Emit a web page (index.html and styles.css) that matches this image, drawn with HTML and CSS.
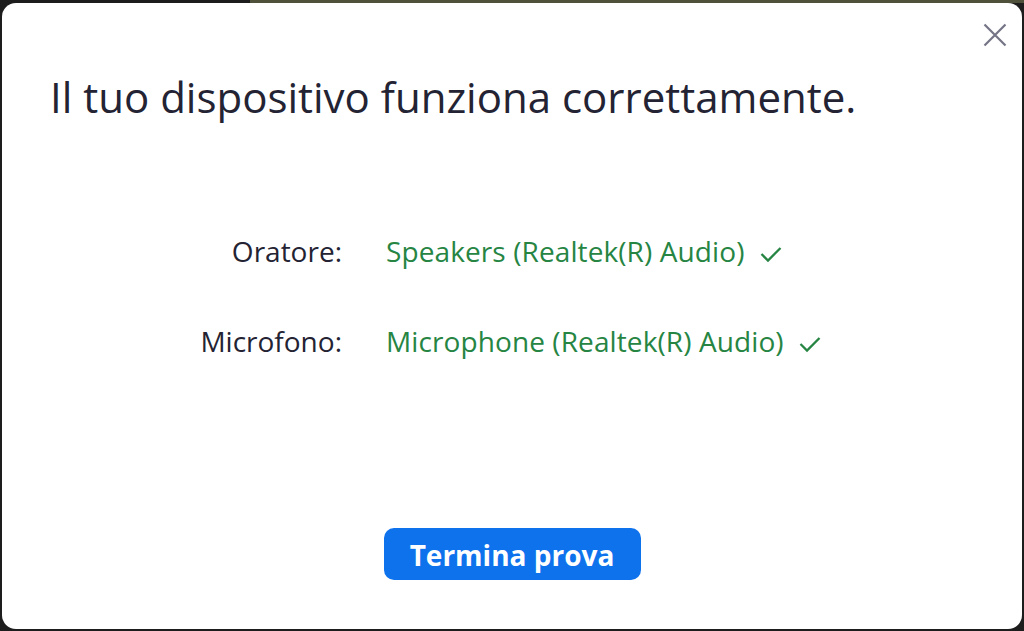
FILE: index.html
```html
<!DOCTYPE html>
<html>
<head>
    <meta charset="utf-8">
    <link rel="stylesheet" href="styles.css">
</head>
<body>
    <div class="backdrop">
        <div class="dialog">
            <button class="close" aria-label="Chiudi">
                <svg width="24" height="24" viewBox="0 0 24 24">
                    <path d="M1.5 1.5 L22.5 22.5 M22.5 1.5 L1.5 22.5" stroke="#747487" stroke-width="2.2" fill="none"/>
                </svg>
            </button>

            <h1 class="title">Il tuo dispositivo funziona correttamente.</h1>

            <div class="devices">
                <div class="label">Oratore:</div>
                <div class="value">
                    Speakers (Realtek(R) Audio)
                    <svg class="check" width="22" height="18" viewBox="0 0 22 18">
                        <path d="M1.5 9 L8 15.5 L20.5 3" stroke="#268543" stroke-width="2.3" fill="none"/>
                    </svg>
                </div>

                <div class="label">Microfono:</div>
                <div class="value">
                    Microphone (Realtek(R) Audio)
                    <svg class="check" width="22" height="18" viewBox="0 0 22 18">
                        <path d="M1.5 9 L8 15.5 L20.5 3" stroke="#268543" stroke-width="2.3" fill="none"/>
                    </svg>
                </div>
            </div>

            <div class="actions">
                <button class="primary">Termina prova</button>
            </div>
        </div>
    </div>
</body>
</html>
```

FILE: styles.css
```css
html,
body {
    margin: 0;
    height: 100%;
    overflow: hidden;
    font-family: "Open Sans", "Noto Sans", sans-serif;
    color: #232333;
}

.backdrop {
    height: 100%;
    box-sizing: border-box;
    padding: 3px 2px 2px 2px;
    background:
        linear-gradient(to right, #1d1d1d 0, #1d1d1d 250px, #50513a 250px) top / 100% 3px no-repeat,
        #1d1d1d;
}

.dialog {
    position: relative;
    height: 100%;
    background: #fff;
    border-radius: 14px;
    display: flex;
    flex-direction: column;
}

.close {
    position: absolute;
    top: 20px;
    right: 15px;
    padding: 0;
    border: 0;
    background: none;
}

.title {
    margin: 66px 0 0 48px;
    font-size: 42px;
    font-weight: 400;
    line-height: 56px;
}

.devices {
    margin-top: 106px;
    display: grid;
    grid-template-columns: 340px auto;
    column-gap: 44px;
    row-gap: 50px;
    font-size: 28px;
    line-height: 40px;
}

.label {
    text-align: right;
}

.value {
    color: #268543;
    display: flex;
    align-items: center;
    gap: 15px;
    letter-spacing: 0.1px;
}

.check {
    margin-top: 5px;
}

.actions {
    margin-top: auto;
    margin-bottom: 49px;
    display: flex;
    justify-content: center;
}

.primary {
    width: 257px;
    height: 52px;
    border: 0;
    border-radius: 10px;
    background: #0e72ed;
    color: #fff;
    font-family: "Open Sans", "Noto Sans", sans-serif;
    font-size: 28px;
    font-weight: 700;
    line-height: 52px;
}
```
